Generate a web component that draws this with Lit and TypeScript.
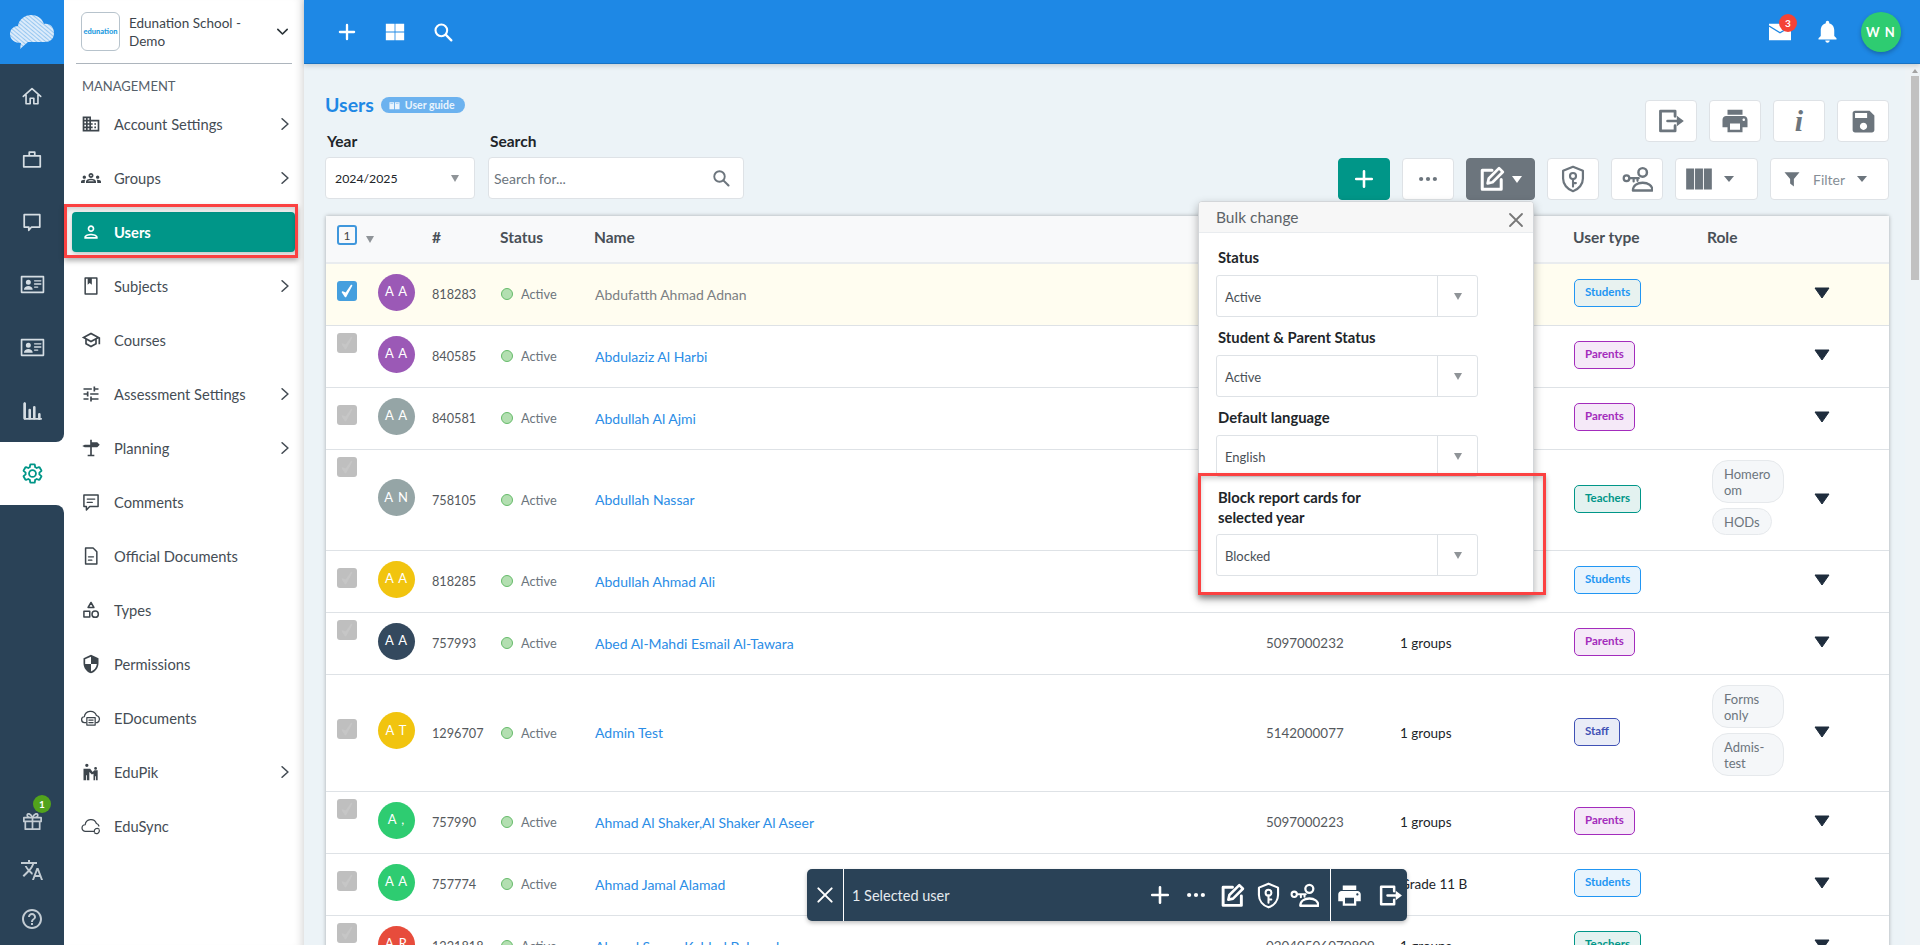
import { LitElement, html, css, svg } from "lit";
import { customElement } from "lit/decorators.js";

const F = (d: string) => svg`<path d=${d} fill="currentColor"/>`;
const ST = (d: string, w = 1.8) =>
  svg`<path d=${d} fill="none" stroke="currentColor" stroke-width=${w} stroke-linejoin="round" stroke-linecap="round"/>`;

const ICONS: Record<string, unknown> = {
  home: ST("M2.5 12.5 12 4l9.5 8.5M5.5 10.5V20.5h4.5v-6h4v6h4.5V10.5"),
  case: svg`${ST("M3 8.5h18v12H3zM9 8.5V4.5h6v4", 1.9)}`,
  chat: ST("M3.5 4h17v13.5H11.5L8.5 21v-3.5h-5z", 1.9),
  idcard: svg`${ST("M1.5 4.5h21v15h-21z", 1.6)}${F("M8 7.5a2.3 2.3 0 1 1 0 4.8 2.3 2.3 0 0 1 0-4.8zM3.8 17c0-2.4 2.2-3.6 4.2-3.6s4.2 1.2 4.2 3.6z")}${ST("M14 8.5h6M14 11.5h6M14 14.5h3", 1.3)}`,
  chart: svg`${ST("M4 3.5V20.5H22M4 20.5", 2)}${ST("M4 4v16M9.5 11v9M14.5 8v12M20 15.5v5", 2.8)}`,
  gear: ST("M19.14 12.94c.04-.3.06-.61.06-.94 0-.32-.02-.64-.07-.94l2.03-1.58c.18-.14.23-.41.12-.61l-1.92-3.32c-.12-.22-.37-.29-.59-.22l-2.39.96c-.5-.38-1.03-.7-1.62-.94l-.36-2.54c-.04-.24-.24-.41-.48-.41h-3.84c-.24 0-.43.17-.47.41l-.36 2.54c-.59.24-1.13.57-1.62.94l-2.39-.96c-.22-.08-.47 0-.59.22L2.74 8.87c-.12.21-.08.47.12.61l2.03 1.58c-.05.3-.09.63-.09.94s.02.64.07.94l-2.03 1.58c-.18.14-.23.41-.12.61l1.92 3.32c.12.22.37.29.59.22l2.39-.96c.5.38 1.03.7 1.62.94l.36 2.54c.05.24.24.41.48.41h3.84c.24 0 .44-.17.47-.41l.36-2.54c.59-.24 1.13-.56 1.62-.94l2.39.96c.22.08.47 0 .59-.22l1.92-3.32c.12-.22.07-.47-.12-.61l-2.01-1.58zM12 15.6c-1.98 0-3.6-1.62-3.6-3.6s1.62-3.6 3.6-3.6 3.6 1.62 3.6 3.6-1.62 3.6-3.6 3.6z", 1.9),
  gift: ST("M3 9h18v4H3zM4.5 13v8h15v-8M12 9v12M12 9C10 4.5 6.5 4 6.5 6.5 6.5 8.5 9 9 12 9zM12 9c2-4.5 5.5-5 5.5-2.5C17.500 8.500 15 9 12 9z", 1.8),
  translate: F("M12.87 15.07l-2.54-2.51.03-.03c1.74-1.94 2.98-4.17 3.71-6.53H17V4h-7V2H8v2H1v1.99h11.17C11.5 7.92 10.44 9.75 9 11.35 8.07 10.32 7.3 9.19 6.69 8h-2c.73 1.63 1.73 3.17 2.98 4.56l-5.09 5.02L4 19l5-5 3.11 3.11.76-2.04zM18.5 10h-2L12 22h2l1.12-3h4.75L21 22h2l-4.5-12zm-2.62 7l1.62-4.33L19.12 17h-3.24z"),
  help: F("M11 18h2v-2h-2v2zm1-16C6.48 2 2 6.48 2 12s4.48 10 10 10 10-4.48 10-10S17.52 2 12 2zm0 18c-4.41 0-8-3.59-8-8s3.59-8 8-8 8 3.59 8 8-3.59 8-8 8zm0-14c-2.21 0-4 1.79-4 4h2c0-1.1.9-2 2-2s2 .9 2 2c0 2-3 1.75-3 5h2c0-2.25 3-2.5 3-5 0-2.21-1.79-4-4-4z"),
  domain: F("M12 7V3H2v18h20V7H12zM6 19H4v-2h2v2zm0-4H4v-2h2v2zm0-4H4V9h2v2zm0-4H4V5h2v2zm4 12H8v-2h2v2zm0-4H8v-2h2v2zm0-4H8V9h2v2zm0-4H8V5h2v2zm10 12h-8v-2h2v-2h-2v-2h2v-2h-2V9h8v10zm-2-8h-2v2h2v-2zm0 4h-2v2h2v-2z"),
  groups: F("M4 13c1.1 0 2-.9 2-2s-.9-2-2-2-2 .9-2 2 .9 2 2 2zm1.13 1.1c-.37-.06-.74-.1-1.13-.1-.99 0-1.93.21-2.78.58C.48 14.9 0 15.62 0 16.43V18h4.5v-1.61c0-.83.23-1.61.63-2.29zM20 13c1.1 0 2-.9 2-2s-.9-2-2-2-2 .9-2 2 .9 2 2 2zm4 3.43c0-.81-.48-1.53-1.22-1.85-.85-.37-1.79-.58-2.78-.58-.39 0-.76.04-1.13.1.4.68.63 1.46.63 2.29V18H24v-1.57zm-7.76-2.78c-1.17-.52-2.61-.9-4.24-.9-1.63 0-3.07.39-4.24.9C6.68 14.13 6 15.21 6 16.39V18h12v-1.61c0-1.18-.68-2.26-1.76-2.74zM8.07 16c.09-.23.13-.39.91-.69.97-.38 1.99-.56 3.02-.56s2.05.18 3.02.56c.77.3.81.46.91.69H8.07zM12 8c.55 0 1 .45 1 1s-.45 1-1 1-1-.45-1-1 .45-1 1-1m0-2c-1.66 0-3 1.34-3 3s1.34 3 3 3 3-1.34 3-3-1.34-3-3-3z"),
  person: F("M12 6c1.1 0 2 .9 2 2s-.9 2-2 2-2-.9-2-2 .9-2 2-2m0 10c2.7 0 5.8 1.29 6 2H6c.23-.72 3.31-2 6-2m0-12C9.79 4 8 5.79 8 8s1.79 4 4 4 4-1.79 4-4-1.79-4-4-4zm0 10c-2.67 0-8 1.34-8 4v2h16v-2c0-2.66-5.33-4-8-4z"),
  book: svg`${ST("M5 2.500h14v19H5z", 1.8)}${F("M8 2.500h5v8l-2.500-2L8 10.500z")}`,
  school: F("M12 3L1 9l4 2.18v6L12 21l7-3.82v-6l2-1.09V17h2V9L12 3zm6.82 6L12 12.72 5.18 9 12 5.28 18.82 9zM17 15.99l-5 2.73-5-2.73v-3.72L12 15l5-2.73v3.72z"),
  tune: F("M3 17v2h6v-2H3zM3 5v2h10V5H3zm10 16v-2h8v-2h-8v-2h-2v6h2zM7 9v2H3v2h4v2h2V9H7zm14 4v-2H11v2h10zm-6-4h2V7h4V5h-4V3h-2v6z"),
  post: F("M11 2h2v3h6.500l3 3-3 3H13v9h3v2H8v-2h3v-9H4.500l-3-1.500 3-1.500H11z"),
  comment: svg`${ST("M3.500 3.500h17v14h-10l-4 4v-4h-3z", 1.8)}${ST("M7.500 8.500h9M7.500 12.500h6", 1.6)}`,
  doc: svg`${ST("M5.500 2.500h9l4.500 4.500v14.500H5.500z", 1.8)}${ST("M9 13h6M9 17h4", 1.6)}`,
  types: svg`${ST("M12 3l3.500 6h-7z", 1.8)}${ST("M3.500 13.500h7v7h-7z", 1.8)}<circle cx="17" cy="17" r="3.800" fill="none" stroke="currentColor" stroke-width="1.800"/>`,
  shieldhalf: F("M12 1L3 5v6c0 5.55 3.84 10.74 9 12 5.16-1.26 9-6.45 9-12V5l-9-4zm0 10.99h7c-.53 4.12-3.28 7.79-7 8.94V12H5V6.3l7-3.11v8.8z"),
  edocs: svg`${ST("M6 17.500H4.500a3.500 3.500 0 0 1-.5-7 7.500 7.500 0 0 1 14.500-1.500 4.500 4.500 0 0 1 1 8.500H18", 1.5)}${ST("M7 11.500h10v9H7zM9.500 14.500h5M9.500 17.500h5", 1.5)}`,
  edupik: svg`${F("M7 2a2 2 0 1 1 0 4 2 2 0 0 1 0-4zM17.500 6a1.700 1.700 0 1 1 0 3.400 1.700 1.700 0 0 1 0-3.400zM3 8h8l3 4 2-2h4v12h-2v-5h-1v5h-2v-8l-2 1-3-3v10H7v-6H6v6H3z")}`,
  edusync: svg`${ST("M15 18.500H5.500a4 4 0 0 1-.5-8A7 7 0 0 1 18.500 9a4.500 4.500 0 0 1 3 3", 1.5)}${ST("M16 19a3.500 3.500 0 0 1 5.500-3.500M22 17a3.500 3.500 0 0 1-5.500 3.500", 1.5)}`,
  exit: svg`${ST("M15.500 8V3.500H3v17h12.500V16", 2.400)}${ST("M9 12h9", 2.200)}${F("M17 7.500 23 12l-6 4.500z")}`,
  print: F("M19 8H5c-1.66 0-3 1.34-3 3v6h4v4h12v-4h4v-6c0-1.66-1.34-3-3-3zm-3 11H8v-5h8v5zm3-7c-.55 0-1-.45-1-1s.45-1 1-1 1 .45 1 1-.45 1-1 1zm-1-9H6v4h12V3z"),
  save: F("M17 3H5c-1.11 0-2 .9-2 2v14c0 1.1.89 2 2 2h14c1.1 0 2-.9 2-2V7l-4-4zm-5 16c-1.66 0-3-1.34-3-3s1.34-3 3-3 3 1.34 3 3-1.34 3-3 3zm3-10H5V5h10v4z"),
  plus: ST("M12 3.500v17M3.500 12h17", 2.800),
  dots: svg`<circle cx="4.500" cy="12" r="2.300" fill="currentColor"/><circle cx="12" cy="12" r="2.300" fill="currentColor"/><circle cx="19.500" cy="12" r="2.300" fill="currentColor"/>`,
  edit: svg`${ST("M12 4H3v17.500h17.500V12.500", 2.800)}${ST("M18.500 2l3.500 3.500-9.500 9.500-4.500 1 1-4.500z", 2.500)}`,
  shieldkey: svg`${ST("M12 1.500 3.500 5v6.500c0 5 3.500 9.300 8.500 11 5-1.700 8.500-6 8.500-11V5z", 1.900)}<circle cx="12" cy="9.500" r="2.600" fill="none" stroke="currentColor" stroke-width="1.800"/>${ST("M12 12v6.500M12 15.500h2.500", 1.800)}`,
  keyuser: svg`<circle cx="3.500" cy="11" r="2.200" fill="none" stroke="currentColor" stroke-width="1.700"/>${ST("M5.700 11H13M9 11v2.500M12 11v2", 1.700)}<circle cx="16" cy="6.500" r="3.300" fill="none" stroke="currentColor" stroke-width="1.900"/>${ST("M8.500 20.500c0-4 3.500-6 7.500-6s7.500 2 7.500 6z", 1.900)}`,
  columns: F("M1 3h6.800v18H1zM8.600 3h6.800v18H8.600zM16.200 3H23v18h-6.800z"),
  filter: F("M2 3h20l-7.500 9v10L9.500 18v-6z"),
  grid: F("M1 2h10.500v9.500H1zM12.500 2H23v9.500H12.500zM1 12.500h10.500V22H1zM12.500 12.500H23V22H12.500z"),
  search: svg`<circle cx="10" cy="10" r="7" fill="none" stroke="currentColor" stroke-width="2.500"/>${ST("M15.500 15.500 22 22", 2.800)}`,
  bell: F("M12 22c1.1 0 2-.9 2-2h-4c0 1.1.9 2 2 2zm6-6v-5c0-3.07-1.64-5.64-4.5-6.32V4c0-.83-.67-1.5-1.5-1.5s-1.5.67-1.5 1.5v.68C7.630 5.360 6 7.920 6 11v5l-2 2v1h16v-1l-2-2z"),
  mail: svg`<path d="M0 1h24v22H0z" fill="currentColor"/><path d="M0 4l12 9 7-5" fill="none" stroke="#1e88e5" stroke-width="1.500"/>`,
  guide: F("M1 5h10v15H1zM13 5h10v15H13zM3 7v1h6V7zM15 7v1h6V7z"),
  chevR: ST("M7 3 17 12 7 21", 2.800),
  chevD: ST("M4.500 8.500 12 16l7.500-7.500", 2.600),
  close: ST("M4 4 20 20M20 4 4 20", 2.400),
};

const ic = (name: string, size: number, h?: number) =>
  html`<svg class="ic" viewBox="0 0 24 24" preserveAspectRatio=${h ? "none" : "xMidYMid"} width=${size} height=${h ?? size} aria-hidden="true">${ICONS[name]}</svg>`;

const cloud = svg`
  <defs>
    <pattern id="hatch" width="3" height="3" patternUnits="userSpaceOnUse" patternTransform="rotate(-50)">
      <rect width="3" height="3" fill="#dcebfa"/>
      <rect width="1" height="3" fill="#98c8f1"/>
    </pattern>
  </defs>
  <path d="M20 49l1-6c-6 0-11-3-11-9 0-5 4-8 8-8 1-7 7-11 13-11 6 0 11 3 13 9 6-1 10 3 10 9 0 6-4 9-9 9H28z" fill="url(#hatch)"/>`;

type Row = {
  ini: string; color: string; id: string; name: string; phone?: string; groups?: string;
  type: "Students" | "Parents" | "Teachers" | "Staff"; chips?: string[]; cbTop: number; sel?: boolean;
};
const P = "#9b59b6", G = "#95a5a6", Y = "#f1c40f", N = "#34495e", GR = "#2ecc71", R = "#e74c3c";
const ROWS: Row[] = [
  { ini: "A A", color: P, id: "818283", name: "Abdufatth Ahmad Adnan", type: "Students", cbTop: 17, sel: true },
  { ini: "A A", color: P, id: "840585", name: "Abdulaziz Al Harbi", type: "Parents", cbTop: 7 },
  { ini: "A A", color: G, id: "840581", name: "Abdullah Al Ajmi", type: "Parents", cbTop: 17 },
  { ini: "A N", color: G, id: "758105", name: "Abdullah Nassar", type: "Teachers", chips: ["Homero\nom", "HODs"], cbTop: 7 },
  { ini: "A A", color: Y, id: "818285", name: "Abdullah Ahmad Ali", type: "Students", cbTop: 17 },
  { ini: "A A", color: N, id: "757993", name: "Abed Al-Mahdi Esmail Al-Tawara", phone: "5097000232", groups: "1 groups", type: "Parents", cbTop: 7 },
  { ini: "A T", color: Y, id: "1296707", name: "Admin Test", phone: "5142000077", groups: "1 groups", type: "Staff", chips: ["Forms\nonly", "Admis-\ntest"], cbTop: 44 },
  { ini: "A ,", color: GR, id: "757990", name: "Ahmad Al Shaker,Al Shaker Al Aseer", phone: "5097000223", groups: "1 groups", type: "Parents", cbTop: 7 },
  { ini: "A A", color: GR, id: "757774", name: "Ahmad Jamal Alamad", groups: "Grade 11 B", type: "Students", cbTop: 17 },
  { ini: "A R", color: R, id: "1221818", name: "Ahmed Samer Kahled Baheeah", phone: "02040506070809", groups: "1 groups", type: "Teachers", cbTop: 7 },
];

const NAV: [string, string, boolean, boolean?][] = [
  ["domain", "Account Settings", true],
  ["groups", "Groups", true],
  ["person", "Users", false, true],
  ["book", "Subjects", true],
  ["school", "Courses", false],
  ["tune", "Assessment Settings", true],
  ["post", "Planning", true],
  ["comment", "Comments", false],
  ["doc", "Official Documents", false],
  ["types", "Types", false],
  ["shieldhalf", "Permissions", false],
  ["edocs", "EDocuments", false],
  ["edupik", "EduPik", true],
  ["edusync", "EduSync", false],
];

const FIELDS: [string, string][] = [
  ["Status", "Active"],
  ["Student & Parent Status", "Active"],
  ["Default language", "English"],
  ["Block report cards for\nselected year", "Blocked"],
];

@customElement("app-root")
export class AppRoot extends LitElement {
  static styles = css`
    :host { display: block; font-family: "Lato", "Noto Sans", sans-serif; color: #495057; }
    * { box-sizing: border-box; }
    .ic { display: block; flex: none; }
    .app { position: relative; display: flex; width: 1920px; height: 945px; overflow: hidden; background: #ecf3f7; }

    .rail { width: 64px; flex: none; display: flex; flex-direction: column; background: #fff; color: #d5dde3; }
    .logo { height: 64px; background: #1e88e5; }
    .rail-top { height: 378px; background: #2a4257; border-bottom-right-radius: 8px; }
    .rail-active { height: 63px; display: flex; align-items: center; justify-content: center; color: #009688; }
    .rail-bottom { flex: 1; background: #2a4257; border-top-right-radius: 8px; display: flex; flex-direction: column; justify-content: flex-end; padding-bottom: 1px; }
    .rail-item { height: 63px; display: flex; align-items: center; justify-content: center; }
    .rail-low { height: 49.500px; display: flex; align-items: center; justify-content: center; position: relative; color: #c3ccd3; }
    .gift-badge { position: absolute; top: -1px; left: 33px; width: 18px; height: 18px; border-radius: 50%; background: #52a31c; color: #fff; font-size: 10px; font-weight: 700; display: flex; align-items: center; justify-content: center; }

    .side { width: 240px; flex: none; background: #fff; box-shadow: inset -9px 0 8px -7px rgba(0,0,0,.16); }
    .brand { height: 64px; margin: 0 12px; border-bottom: 1px solid #adb5bd; display: flex; align-items: center; padding: 0 2px 0 5px; }
    .brand-logo { width: 39px; height: 39px; border: 1px solid #b7c3cc; border-radius: 6px; display: flex; align-items: center; justify-content: center; color: #1e9be0; font-size: 7.500px; font-weight: 900; flex: none; }
    .brand-name { font-size: 13.500px; line-height: 18px; width: 124px; margin-left: 9px; color: #3d454c; }
    .brand-chev { color: #2b3338; margin-left: auto; }
    .mgmt { height: 33px; padding: 14px 0 0 18px; font-size: 13px; line-height: 16px; color: #56606a; }
    .nav { height: 54px; margin: 0 9px 0 8px; padding: 0 3px 0 9px; display: flex; align-items: center; font-size: 14.700px; color: #454d55; }
    .nav-ic { width: 20px; display: flex; justify-content: center; margin-right: 13px; color: #3d454c; }
    .nav-label { flex: 1; }
    .nav.on { margin-top: 7px; margin-bottom: 7px; height: 40px; background: #009688; color: #fff; font-weight: 700; border-radius: 4px; box-shadow: 0 2px 5px rgba(0,0,0,.25); }
    .nav.on .nav-ic { color: #fff; }

    .main { flex: 1; min-width: 0; display: flex; flex-direction: column; }
    .top { height: 64px; flex: none; background: #1e88e5; border-bottom: 1px solid #1873c4; box-shadow: 0 2px 5px rgba(0,0,0,.15); display: flex; align-items: center; color: #fff; padding: 0 19px 0 33px; position: relative; }
    .top-left { display: flex; align-items: center; gap: 28px; flex: 1; }
    .mail { position: relative; margin-right: 23px; }
    .mail-badge { position: absolute; top: -9px; left: 10px; width: 18px; height: 18px; border-radius: 50%; background: #f44336; color: #fff; font-size: 10px; font-weight: 700; display: flex; align-items: center; justify-content: center; }
    .me { margin-left: 20px; width: 40px; height: 40px; border-radius: 50%; background: #2ecc71; box-shadow: 0 2px 4px rgba(0,0,0,.25); font-size: 13px; font-weight: 700; letter-spacing: 1px; display: flex; align-items: center; justify-content: center; }

    .below { flex: 1; min-height: 0; display: flex; }
    .content { flex: 1; min-width: 0; padding: 36px 16px 0 22px; overflow: hidden; }
    .bar { width: 15px; flex: none; background: #eef3f6; display: flex; flex-direction: column; align-items: center; padding: 5px 0 0 4px; }
    .bar-up { width: 0; height: 0; border: 3px solid transparent; border-top: 0; border-bottom: 4px solid #a3a3a3; }
    .bar-thumb { width: 8px; height: 204px; margin-top: 3px; background: #c1c1c1; }

    .head { height: 116px; display: flex; justify-content: space-between; }
    .title-row { display: flex; align-items: center; height: 20px; margin-top: -5px; margin-left: -1px; }
    h1 { margin: 0; font-size: 19.500px; font-weight: 700; color: #1e88e5; line-height: 24px; }
    .pill { margin-left: 7px; height: 16px; padding: 0 10px 0 8px; border-radius: 8px; background: #6cb2ef; color: #eaf4fd; font-size: 10.500px; font-weight: 700; display: flex; align-items: center; gap: 5px; }
    .filters { display: flex; gap: 13px; margin: 16px 0 0 -1px; }
    .lbl { font-size: 15.500px; font-weight: 700; color: #212529; line-height: 20px; padding-left: 2px; margin-bottom: 6px; }
    .sel { height: 42px; background: #fff; border: 1px solid #dee2e6; border-radius: 4px; display: flex; align-items: center; color: #212529; }
    .year { width: 150px; padding: 0 15px 0 9px; justify-content: space-between; font-size: 12.300px; }
    .search { width: 256px; padding: 0 13px 0 5px; justify-content: space-between; color: #6c757d; font-size: 14px; }
    .tri { width: 0; height: 0; border-left: 4px solid transparent; border-right: 4px solid transparent; border-top: 7px solid #8f9498; }
    .tools { display: flex; flex-direction: column; gap: 16px; align-items: flex-end; }
    .tool-row { display: flex; gap: 12px; }
    .btn { width: 52px; height: 42px; background: #fff; border: 1px solid #dee2e6; border-radius: 4px; display: flex; align-items: center; justify-content: center; color: #6c757d; }
    .btn.add { background: #009688; border-color: #009688; color: #fff; }
    .btn.dark { width: 69px; background: #6c757d; border-color: #6c757d; color: #fff; gap: 7px; }
    .btn.cols { width: 83px; gap: 11px; justify-content: flex-start; padding-left: 9px; }
    .btn.flt { width: 119px; gap: 12px; font-size: 14px; justify-content: flex-start; padding-left: 12px; color: #868e96; }
    .flt-ic { color: #6c757d; }
    .i { font: italic 700 30px "Liberation Serif", serif; color: #6c757d; }
    .caret { width: 0; height: 0; border-left: 5px solid transparent; border-right: 5px solid transparent; border-top: 6px solid #6c757d; }
    .caret.w { border-top-color: #fff; border-top-width: 7px; }

    .table { background: #fff; box-shadow: 0 0 4px rgba(0,0,0,.3); margin-bottom: -100px; }
    .row { display: grid; grid-template-columns: 52px 54px 69px 94px 671px 134px 174px 138px 102px 1fr; border-bottom: 1px solid #dee2e6; align-items: center; min-height: 62px; padding-bottom: 1px; }
    .row.sel-row { background: #fffdf0; }
    .thead { min-height: 48px; background: #f8f9fa; border-bottom: 2px solid #e9ecef; font-size: 15.500px; font-weight: 700; color: #495057; padding-bottom: 4px; }
    .th { margin-left: -1px; }
    .th.role { margin-left: -5px; }
    .thead .check { display: flex; align-items: center; gap: 9px; padding-left: 11px; }
    .thead .tri { margin-top: 4px; }
    .count { width: 20px; height: 20px; border: 2px solid #3f97dc; border-radius: 3px; display: flex; align-items: center; justify-content: center; font-size: 12px; font-weight: 400; color: #444; margin-top: -4px; }
    .cb-cell { align-self: start; padding-left: 11px; }
    .cb { width: 20px; height: 20px; border-radius: 3px; background: #bfbfbf; color: #c6c6c6; display: flex; align-items: center; justify-content: center; }
    .cb.on { background: #459fde; color: #fff; }
    .av { width: 37px; height: 37px; border-radius: 50%; color: #fff; font-size: 13px; letter-spacing: 1px; display: flex; align-items: center; justify-content: center; margin-bottom: 4px; padding-bottom: 2px; }
    .id { font-size: 12.700px; color: #55595d; }
    .status { display: flex; align-items: center; font-size: 12.800px; color: #6c757d; }
    .dot { width: 12px; height: 12px; border-radius: 50%; background: #b3dfb1; border: 1px solid #66bb6a; margin-right: 8px; }
    .name { font-size: 14px; color: #2b8de6; }
    .name.grey { color: #7b7f83; }
    .phone { font-size: 13.400px; color: #55595d; }
    .groups { font-size: 13.500px; color: #212529; }
    .badge { display: inline-flex; height: 28px; align-items: center; padding: 0 10px 3px; border: 1px solid; border-radius: 5px; font-size: 11.500px; font-weight: 700; margin-bottom: 2px; }
    .Students { color: #2196f3; border-color: #2196f3; background: #e8f4fd; }
    .sel-row .Students { background: #e8f2f0; }
    .Parents { color: #a32cbc; border-color: #a32cbc; background: #f5e9f8; }
    .Teachers { color: #009688; border-color: #009688; background: #e3f2f0; }
    .Staff { color: #3f51b5; border-color: #3f51b5; background: #e9ecf7; }
    .chips { display: flex; flex-direction: column; align-items: flex-start; gap: 5px; padding: 10px 0 14px; }
    .chip { border: 1px solid #e6e9ec; background: #f5f7f9; border-radius: 14px; padding: 4.500px 11px; font-size: 13px; line-height: 16px; color: #6c757d; white-space: pre-line; }
    .chip.two { width: 72px; border-radius: 16px; }
    .arrow { width: 16px; height: 12px; color: #1f2d3d; margin-bottom: 2px; }

    .pop { position: absolute; left: 1198px; top: 201px; width: 336px; height: 394px; background: #fff; border: 1px solid #d3d6d9; border-radius: 4px; box-shadow: 0 4px 10px rgba(0,0,0,.3); overflow: hidden; }
    .pop-head { height: 31px; background: #f7f7f7; border-bottom: 1px solid #e9ecef; display: flex; align-items: center; justify-content: space-between; padding: 0 8px 0 17px; font-size: 15.500px; color: #5d6368; }
    .pop-x { color: #777; margin-top: 6px; }
    .pop-body { padding: 15px 17px 0; }
    .field { margin-bottom: 11px; }
    .field-lbl { font-size: 14.800px; font-weight: 700; line-height: 19.500px; min-height: 20px; color: #212529; padding: 0 0 0 2px; margin-bottom: 7px; white-space: pre-line; }
    .pick { width: 262px; height: 42px; border: 1px solid #dee2e6; border-radius: 3px; display: flex; align-items: center; font-size: 13px; color: #495057; }
    .pick-v { flex: 1; padding: 1px 0 0 8px; }
    .pick-t { width: 40px; height: 100%; border-left: 1px solid #dee2e6; display: flex; align-items: center; justify-content: center; }

    .mark { position: absolute; border: 3px solid #fb4141; box-shadow: 0 3px 5px rgba(0,0,0,.3), inset 0 3px 5px rgba(0,0,0,.18); pointer-events: none; }
    .m1 { left: 64px; top: 204px; width: 234px; height: 54px; }
    .m2 { left: 1198px; top: 473px; width: 348px; height: 122px; }

    .sel-bar { position: absolute; left: 807px; top: 869px; width: 600px; height: 52px; background: #2a4257; color: #fff; border-radius: 5px; box-shadow: 0 2px 4px rgba(0,0,0,.25); display: flex; align-items: center; }
    .sb-x { width: 37px; height: 100%; border-right: 1px solid #fff; display: flex; align-items: center; justify-content: center; }
    .sb-text { flex: 1; padding-left: 8px; font-size: 14.500px; color: #e6ebef; }
    .sb-tools { display: flex; align-items: center; padding-right: 8px; height: 100%; }
    .sb-cell { width: 36px; display: flex; justify-content: center; }
    .sb-end { width: 77px; height: 100%; border-left: 1px solid #fff; display: flex; align-items: center; justify-content: center; gap: 15px; }
  `;

  private cell(r: Row) {
    return html`<div class="row ${r.sel ? "sel-row" : ""}">
      <div class="cb-cell" style="padding-top:${r.cbTop}px"><div class="cb ${r.sel ? "on" : ""}">
        <svg viewBox="0 0 20 20" width="20" height="20" aria-hidden="true"><path d="M5.500 11 8.500 15.500 14.500 4.500 9 12.500z" fill="currentColor" stroke="currentColor" stroke-width="1.600" stroke-linejoin="round"/></svg>
      </div></div>
      <div class="av" style="background:${r.color}">${r.ini}</div>
      <div class="id">${r.id}</div>
      <div class="status"><span class="dot"></span>Active</div>
      <div class="name ${r.sel ? "grey" : ""}">${r.name}</div>
      <div class="phone">${r.phone ?? ""}</div>
      <div class="groups">${r.groups ?? ""}</div>
      <div><span class="badge ${r.type}">${r.type}</span></div>
      <div>${r.chips
        ? html`<div class="chips">${r.chips.map((c) => html`<div class="chip ${c.includes("\n") ? "two" : ""}">${c}</div>`)}</div>`
        : ""}</div>
      <svg class="arrow" viewBox="0 0 16 12"><path d="M1 1h14L8 11z" fill="currentColor" stroke="currentColor" stroke-linejoin="round"/></svg>
    </div>`;
  }

  render() {
    return html`<div class="app">
      <aside class="rail">
        <div class="logo"><svg viewBox="0 0 64 64" width="64" height="64">${cloud}</svg></div>
        <div class="rail-top">
          ${["home", "case", "chat", "idcard", "idcard", "chart"].map((n) => html`<div class="rail-item">${ic(n, n === "idcard" ? 25 : 22)}</div>`)}
        </div>
        <div class="rail-active">${ic("gear", 23)}</div>
        <div class="rail-bottom">
          <div class="rail-low">${ic("gift", 23)}<span class="gift-badge">1</span></div>
          <div class="rail-low">${ic("translate", 24)}</div>
          <div class="rail-low">${ic("help", 24)}</div>
        </div>
      </aside>

      <nav class="side">
        <div class="brand">
          <div class="brand-logo">edunation</div>
          <div class="brand-name">Edunation School - Demo</div>
          <div class="brand-chev">${ic("chevD", 15)}</div>
        </div>
        <div class="mgmt">MANAGEMENT</div>
        ${NAV.map(([icon, label, chev, on]) => html`<div class="nav ${on ? "on" : ""}">
          <span class="nav-ic">${ic(icon, 20)}</span><span class="nav-label">${label}</span>${chev ? ic("chevR", 14) : ""}
        </div>`)}
      </nav>

      <main class="main">
        <header class="top">
          <div class="top-left">${ic("plus", 20)}${ic("grid", 20)}${ic("search", 20)}</div>
          <div class="mail">${ic("mail", 22, 18)}<span class="mail-badge">3</span></div>
          ${ic("bell", 27)}
          <div class="me">W N</div>
        </header>
        <div class="below">
          <div class="content">
            <div class="head">
              <div>
                <div class="title-row"><h1>Users</h1><span class="pill">${ic("guide", 11)}User guide</span></div>
                <div class="filters">
                  <div><div class="lbl">Year</div><div class="sel year">2024/2025<span class="tri"></span></div></div>
                  <div><div class="lbl">Search</div><div class="sel search">Search for...${ic("search", 18)}</div></div>
                </div>
              </div>
              <div class="tools">
                <div class="tool-row">
                  <div class="btn">${ic("exit", 28)}</div>
                  <div class="btn">${ic("print", 30)}</div>
                  <div class="btn"><span class="i">i</span></div>
                  <div class="btn">${ic("save", 29)}</div>
                </div>
                <div class="tool-row">
                  <div class="btn add">${ic("plus", 22)}</div>
                  <div class="btn">${ic("dots", 22)}</div>
                  <div class="btn dark">${ic("edit", 26)}<span class="caret w"></span></div>
                  <div class="btn">${ic("shieldkey", 28)}</div>
                  <div class="btn">${ic("keyuser", 31)}</div>
                  <div class="btn cols">${ic("columns", 28)}<span class="caret"></span></div>
                  <div class="btn flt"><span class="flt-ic">${ic("filter", 18)}</span>Filter<span class="caret"></span></div>
                </div>
              </div>
            </div>
            <div class="table">
              <div class="row thead">
                <div class="check"><span class="count">1</span><span class="tri"></span></div>
                <div></div>
                <div>#</div>
                <div class="th">Status</div>
                <div class="th">Name</div>
                <div></div>
                <div></div>
                <div class="th">User type</div>
                <div class="th role">Role</div>
                <div></div>
              </div>
              ${ROWS.map((r) => this.cell(r))}
            </div>
          </div>
          <div class="bar"><span class="bar-up"></span><span class="bar-thumb"></span></div>
        </div>
      </main>

      <section class="pop">
        <div class="pop-head"><span>Bulk change</span><span class="pop-x">${ic("close", 18)}</span></div>
        <div class="pop-body">
          ${FIELDS.map(([l, v]) => html`<div class="field">
            <div class="field-lbl">${l}</div>
            <div class="pick"><span class="pick-v">${v}</span><span class="pick-t"><span class="tri"></span></span></div>
          </div>`)}
        </div>
      </section>

      <div class="mark m1"></div>
      <div class="mark m2"></div>

      <div class="sel-bar">
        <div class="sb-x">${ic("close", 20)}</div>
        <div class="sb-text">1 Selected user</div>
        <div class="sb-tools">
          <span class="sb-cell">${ic("plus", 22)}</span>
          <span class="sb-cell">${ic("dots", 22)}</span>
          <span class="sb-cell">${ic("edit", 25)}</span>
          <span class="sb-cell">${ic("shieldkey", 27)}</span>
          <span class="sb-cell">${ic("keyuser", 29)}</span>
        </div>
        <div class="sb-end">${ic("print", 27)}${ic("exit", 25)}</div>
      </div>
    </div>`;
  }
}
